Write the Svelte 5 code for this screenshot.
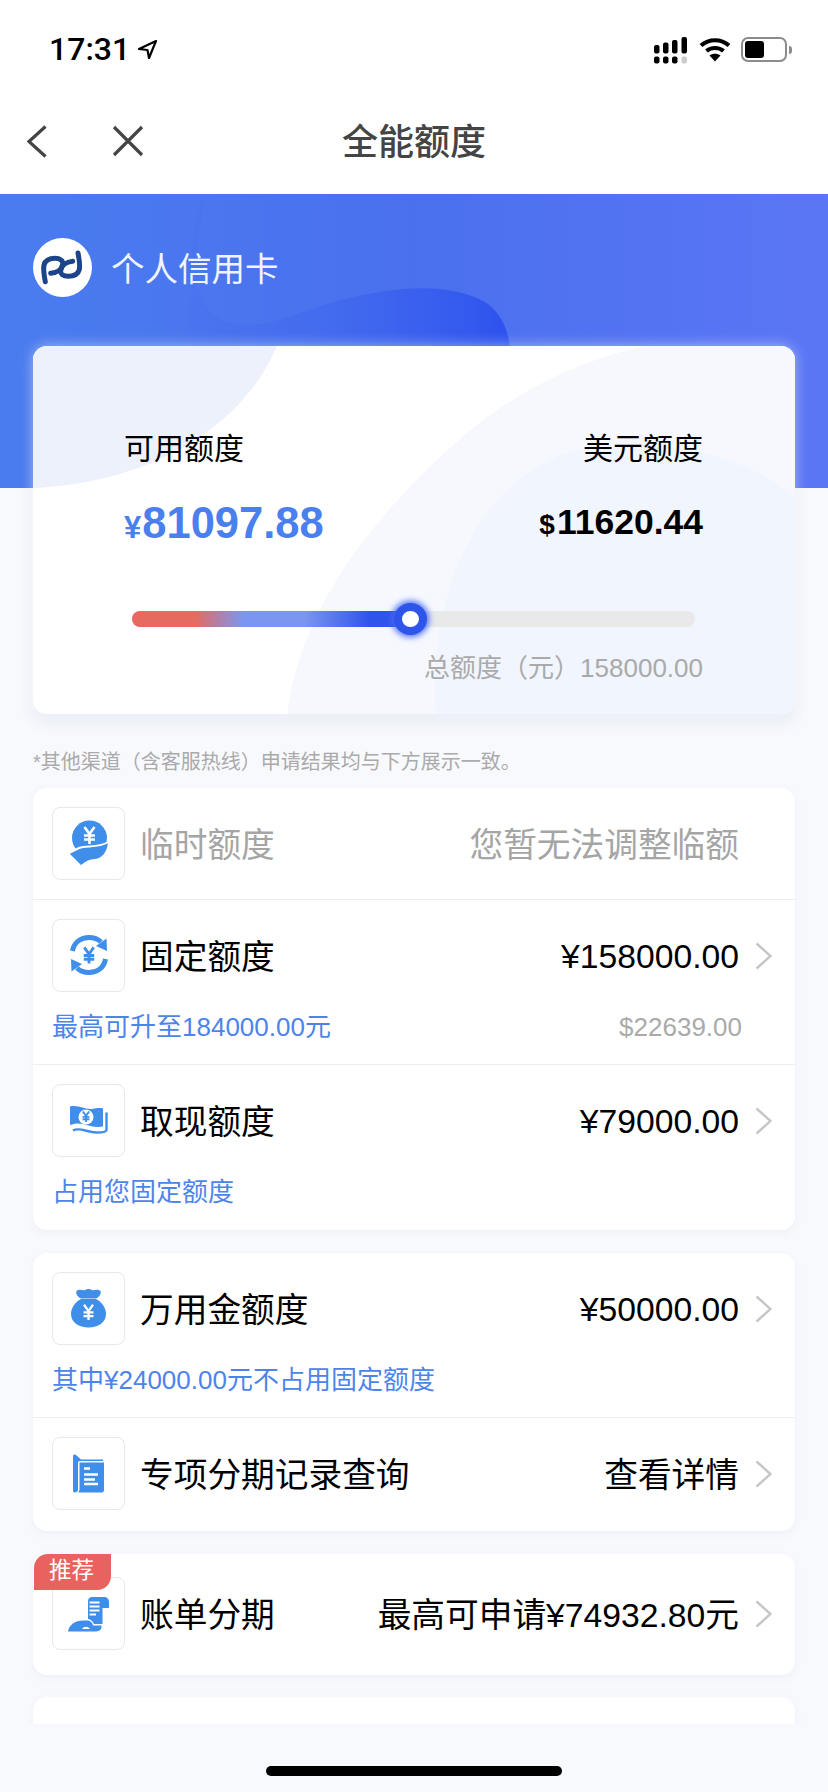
<script>
const yen = "M-5 -8 L0 -1 L5 -8 M0 -1 V9 M-5.5 0.5 H5.5 M-5.5 4.5 H5.5";
</script>

{#snippet chevron()}
    <svg class="chevron" viewBox="0 0 17 28"><path d="M1.5 1.5 L15.5 14 L1.5 26.5"/></svg>
{/snippet}

<div class="screen">
    <div class="status">
        <div class="time">
            <span>17:31</span>
            <svg width="21" height="21" viewBox="0 0 21 21"><path d="M19 2 L2 10 L10.5 11 L12 19 Z" fill="none" stroke="#000" stroke-width="2.2" stroke-linejoin="round"/></svg>
        </div>
        <div class="status-icons">
            <svg width="34" height="27" viewBox="0 0 34 27">
                <rect x="0" y="8" width="5.500" height="8.500" rx="2"/>
                <rect x="9" y="5.500" width="5.500" height="11" rx="2"/>
                <rect x="18" y="3" width="5.500" height="13.500" rx="2"/>
                <rect x="27.500" y="0" width="5.500" height="16.500" rx="2"/>
                <rect x="0" y="19.500" width="5.500" height="7" rx="2"/>
                <rect x="9" y="19.500" width="5.500" height="7" rx="2"/>
                <rect x="18" y="19.500" width="5.500" height="7" rx="2"/>
                <rect x="27.500" y="19.500" width="5.500" height="7" rx="2" fill="#ccc"/>
            </svg>
            <svg class="wifi" width="32" height="25" viewBox="0 0 32 25">
                <path d="M2 8.500 C10 1.500 22 1.500 30 8.500 M7.500 14 C12 10 20 10 24.500 14" fill="none" stroke="#000" stroke-width="4.200"/>
                <path d="M16 24.500 L10.500 18.500 C13.500 16 18.500 16 21.500 18.500 Z"/>
            </svg>
            <div class="battery"><div class="battery-level"></div></div>
            <div class="battery-nub"></div>
        </div>
    </div>

    <div class="nav">
        <svg class="nav-back" width="22" height="33" viewBox="0 0 22 33"><path d="M19.500 1.500 L3 16.500 L19.500 31.500"/></svg>
        <svg class="nav-close" width="32" height="32" viewBox="0 0 32 32"><path d="M2 2 L30 30 M30 2 L2 30"/></svg>
        <div class="nav-title">全能额度</div>
    </div>

    <div class="page">
        <div class="hero">
            <div class="band">
                <svg class="blob" viewBox="0 0 828 294" preserveAspectRatio="none">
                    <defs>
                        <linearGradient id="blobFill" x1="0" x2="1" y1="0" y2="0">
                            <stop offset="0" stop-color="#3f64ea" stop-opacity="0.07"/>
                            <stop offset="0.45" stop-color="#3760ee" stop-opacity="0.4"/>
                            <stop offset="1" stop-color="#2d52ee"/>
                        </linearGradient>
                    </defs>
                    <path d="M205 0 C186 40 186 90 212 120 C240 140 270 130 320 112 C390 90 450 88 485 108 C510 124 514 160 506 170 L180 170 Z" fill="url(#blobFill)"/>
                </svg>
            </div>

            <div class="brand">
                <svg class="logo" width="59" height="59" viewBox="0 0 59 59">
                    <circle cx="29.500" cy="29.500" r="29.500" fill="#fff"/>
                    <g fill="none" stroke="#1c4488" stroke-width="5" stroke-linecap="round">
                        <path d="M12.300 43.700 C11 37 10.300 30.300 11 27 C12.300 22 17.700 20.300 22.300 20.300 C27 20.300 30.300 22.700 29.700 26 C29 31.300 23.700 34.700 17.700 35.300"/>
                        <path d="M45 15 C46.300 21.700 47 28.300 46.300 31.700 C45 36.700 39.700 38.300 35 38.300 C30.300 38.300 27 36 27.700 32.700 C28.300 27.300 33.700 24 39.700 23.300"/>
                    </g>
                </svg>
                <span>个人信用卡</span>
            </div>

            <div class="summary">
                <svg class="summary-bg" viewBox="0 0 762 368" preserveAspectRatio="none">
                    <path d="M0 0 H244 C214 72 130 136 0 142 Z" fill="#ecf1fc"/>
                    <path d="M611 0 H762 V368 H254 C268 260 340 170 430 90 C490 40 550 14 611 0 Z" fill="#f6f8fe"/>
                    <path d="M403 368 C394 260 440 120 560 101 C640 92 710 110 762 150 V368 Z" fill="#f1f5fd"/>
                </svg>
                <div class="balances">
                    <div>
                        <div class="balance-label">可用额度</div>
                        <div class="balance-main"><small>¥</small>81097.88</div>
                    </div>
                    <div class="right">
                        <div class="balance-label">美元额度</div>
                        <div class="balance-usd"><small>$</small>11620.44</div>
                    </div>
                </div>
                <div class="track">
                    <div class="track-fill"></div>
                    <div class="thumb"></div>
                </div>
                <div class="total">总额度（元）158000.00</div>
            </div>

            <div class="note">*其他渠道（含客服热线）申请结果均与下方展示一致。</div>
        </div>

        <div class="cards">
            <div class="card card-a">
                <div class="row muted">
                    <div class="icon">
                        <svg viewBox="0 0 73 73">
                            <circle cx="37.500" cy="31" r="17.500"/>
                            <path d="M17.500 46.500 L27 41.500 C35 38.500 45 42 56 35.500 C55 45 50 51.500 43 52 C37 52.500 35 53.500 29 58 Z"/>
                            <path class="gap" d="M17 46 L27 41 C35 38 45 41.500 56.500 35"/>
                            <path class="yen" transform="translate(37.500 28)" d={yen}/>
                        </svg>
                    </div>
                    <div class="label">临时额度</div>
                    <div class="value plain cjk">您暂无法调整临额</div>
                </div>

                <div class="row has-sub">
                    <div class="icon">
                        <svg viewBox="0 0 73 73">
                            <path class="ring" d="M20.500 32 C22 23 29 18.500 37 18.500 C42 18.500 46 20 49 23"/>
                            <path d="M54.500 19.500 L55 32 L44 27 Z"/>
                            <path class="ring" d="M53.500 40 C52 49 45 53.500 37 53.500 C32 53.500 28 52 25 49"/>
                            <path d="M19.500 52.500 L19 40 L30 45 Z"/>
                            <path class="yen thin" transform="translate(37 36) scale(0.95)" d={yen}/>
                        </svg>
                    </div>
                    <div class="label">固定额度</div>
                    <div class="value">¥158000.00</div>
                    {@render chevron()}
                </div>
                <div class="sub">
                    <span>最高可升至184000.00元</span>
                    <span class="sub-usd">$22639.00</span>
                </div>

                <div class="row has-sub">
                    <div class="icon">
                        <svg viewBox="0 0 73 73">
                            <path d="M18 22.500 C26 20.500 33 25.500 39 25 C44 24.500 47 23.500 51 24.500 V42.500 C43 44 37 41.500 31 40 C26 39 22 39.500 18 41 Z"/>
                            <circle cx="34" cy="33" r="7.500" fill="#fff"/>
                            <path class="yen thin" transform="translate(34 32.500) scale(0.62)" d={yen}/>
                            <path class="line" d="M21 46.500 C28 42.500 36 49 45 48.500 C49 48.500 54.500 48.500 54.500 46 V28.500"/>
                        </svg>
                    </div>
                    <div class="label">取现额度</div>
                    <div class="value">¥79000.00</div>
                    {@render chevron()}
                </div>
                <div class="sub sub-inset">占用您固定额度</div>
            </div>

            <div class="card card-b">
                <div class="row has-sub">
                    <div class="icon">
                        <svg viewBox="0 0 73 73">
                            <path d="M25 18.500 C28 16.500 31 19 33 18 C35 16.500 38 16.500 40 18 C42 19 45 16.500 48 18.500 C50 20 48 25 44 26.500 H29 C25 25 23 20 25 18.500 Z"/>
                            <path d="M29 27 H44 C50 30 54 36 54 42 C54 50.500 46 55.500 36.500 55.500 C27 55.500 19 50.500 19 42 C19 36 23 30 29 27 Z"/>
                            <path class="yen" transform="translate(36.500 40) scale(0.9)" d={yen}/>
                        </svg>
                    </div>
                    <div class="label">万用金额度</div>
                    <div class="value">¥50000.00</div>
                    {@render chevron()}
                </div>
                <div class="sub">其中¥24000.00元不占用固定额度</div>

                <div class="row">
                    <div class="icon">
                        <svg viewBox="0 0 73 73">
                            <path d="M21 19 C21 17.500 23 17 24 18 L29 22.500 H51 V24 H28 C26.500 24 26 25 26 26.500 V53 C26 55 23 56 21.500 55 C21 54.500 21 54 21 53 Z"/>
                            <path d="M27.500 25.500 H52 V53 C52 54.500 51 55.500 50 55.500 H26 C27 54.500 27.500 53.500 27.500 52 Z"/>
                            <path class="bars" d="M32 31.500 H38 M32 37.500 H46 M32 42.500 H43 M32 47 H46"/>
                        </svg>
                    </div>
                    <div class="label">专项分期记录查询</div>
                    <div class="value cjk">查看详情</div>
                    {@render chevron()}
                </div>
            </div>

            <div class="card card-c">
                <div class="badge">推荐</div>
                <div class="row">
                    <div class="icon">
                        <svg viewBox="0 0 73 73">
                            <path d="M36 24 C36 21.500 38 20 40 20 H52 C55 20 57 22 57 25 V31 H50.500 V47 H42 C41 44 38 42 36 42 Z"/>
                            <path d="M16 54.500 C17 48 23 43.500 31 43.500 H35 C38 43.500 40.500 45 41 48.500 H49.500 C50 51.500 48 54.500 44 54.500 Z"/>
                            <path class="bars thin-bars" d="M37.500 25.500 H47.500 M37.500 29.500 H47.500 M37.500 33.500 H47.500 M37.500 37.500 H44"/>
                            <path d="M30 52 C32 49 36 49 38 52 Z" fill="#fff"/>
                        </svg>
                    </div>
                    <div class="label">账单分期</div>
                    <div class="value cjk">最高可申请¥74932.80元</div>
                    {@render chevron()}
                </div>
            </div>

            <div class="card card-d"></div>
        </div>
    </div>

    <div class="home"><div class="home-bar"></div></div>
</div>

<style>
:global(body) {
    margin: 0;
    background: #f7f9fd;
}

.screen {
    width: 828px;
    height: 1792px;
    overflow: hidden;
    display: flex;
    flex-direction: column;
    background: #f7f9fd;
    font-family: "Liberation Sans", "Noto Sans CJK SC", sans-serif;
    color: #000;
}

.status {
    height: 90px;
    flex: none;
    box-sizing: border-box;
    padding: 37px 36px 0 49px;
    background: #fff;
    display: flex;
    justify-content: space-between;
    align-items: flex-start;
}

.time {
    display: flex;
    align-items: center;
    gap: 7px;
    height: 24px;
    font-family: Roboto, sans-serif;
    font-weight: 500;
    font-size: 32px;
}

.status-icons {
    display: flex;
    align-items: flex-start;
}

.status-icons .wifi {
    margin: 0 10px 0 11px;
}

.battery {
    width: 46px;
    height: 25px;
    box-sizing: border-box;
    border: 2px solid #8c8c8c;
    border-radius: 7px;
    padding: 2px;
}

.battery-level {
    width: 19px;
    height: 17px;
    background: #000;
    border-radius: 3px;
}

.battery-nub {
    width: 3px;
    height: 8px;
    margin: 9px 0 0 2px;
    background: #8c8c8c;
    border-radius: 0 3px 3px 0;
}

.nav {
    height: 104px;
    flex: none;
    background: #fff;
    position: relative;
    display: flex;
    align-items: center;
    justify-content: center;
}

.nav svg {
    position: absolute;
    fill: none;
    stroke: #444;
    stroke-width: 3.2;
}

.nav-back {
    left: 26px;
    top: 35px;
}

.nav-close {
    left: 112px;
    top: 35px;
}

.nav-title {
    font-size: 36px;
    font-weight: 500;
    color: #444;
    margin-bottom: 6px;
}

.page {
    height: 1530px;
    flex: none;
    overflow: hidden;
}

.hero {
    position: relative;
    padding: 0 33px;
}

.band {
    position: absolute;
    left: 0;
    right: 0;
    top: 0;
    height: 294px;
    background: linear-gradient(90deg, #4a7cef, #4a70ee 50%, #5b76f5);
}

.blob {
    width: 100%;
    height: 100%;
    display: block;
}

.brand {
    position: relative;
    height: 152px;
    box-sizing: border-box;
    padding-top: 44px;
    display: flex;
    align-items: flex-start;
    gap: 19px;
    color: #fff;
    font-size: 33.500px;
    line-height: 63px;
}

.brand span {
    opacity: 0.92;
}

.summary {
    position: relative;
    height: 368px;
    box-sizing: border-box;
    padding-top: 86px;
    background: #fff;
    border-radius: 14px;
    box-shadow: 0 0 14px rgba(255, 255, 255, 0.5), 0 8px 16px rgba(60, 80, 140, 0.09);
}

.summary-bg {
    position: absolute;
    left: 0;
    top: 0;
    width: 100%;
    height: 100%;
    border-radius: 14px;
}

.balances {
    position: relative;
    display: flex;
    justify-content: space-between;
    padding: 0 92px 0 91px;
}

.right {
    text-align: right;
}

.balance-label {
    font-size: 30px;
    line-height: 34px;
}

.balance-main {
    margin-top: 32px;
    font-size: 43.500px;
    line-height: 50px;
    font-weight: 700;
    color: #4a7ff0;
}

.balance-main small {
    font-size: 31px;
    margin-right: 1px;
}

.balance-usd {
    margin-top: 31px;
    font-size: 35.500px;
    line-height: 50px;
    font-weight: 700;
}

.balance-usd small {
    font-size: 28px;
    margin-right: 2px;
}

.track {
    position: relative;
    height: 16px;
    margin: 58px 100px 0 99px;
    border-radius: 8px;
    background: #e9e9e9;
}

.track-fill {
    width: 271px;
    height: 100%;
    border-radius: 8px 0 0 8px;
    background: linear-gradient(90deg, #e66a60 0, #e66a60 63px, #7b96f0 111px, #7b96f0 172px, #2f54eb 238px);
}

.thumb {
    position: absolute;
    left: 262px;
    top: -8px;
    width: 17px;
    height: 16px;
    border-radius: 50%;
    background: #fff;
    border: 8px solid #2f54eb;
    box-shadow: 0 0 6px 2px #4a6cf0;
}

.total {
    position: relative;
    margin: 25px 92px 0 0;
    text-align: right;
    font-size: 26px;
    line-height: 32px;
    color: #aaa;
}

.note {
    position: relative;
    margin-top: 33px;
    height: 30px;
    line-height: 30px;
    font-size: 20px;
    color: #aaa;
}

.cards {
    display: flex;
    flex-direction: column;
    gap: 23px;
    padding: 11px 33px 0;
}

.card {
    position: relative;
    flex: none;
    background: #fff;
    border-radius: 14px;
    box-shadow: 0 3px 8px rgba(60, 80, 140, 0.05);
}

.card-a {
    padding-bottom: 1px;
}

.card-b {
    padding-bottom: 2px;
}

.card-c {
    padding: 4px 0 6px;
}

.card-d {
    height: 60px;
    margin-top: -1px;
}

.row {
    display: flex;
    align-items: center;
    padding: 19px 23px 19px 19px;
    border-top: 1px solid #eee;
}

.card > .row:first-child,
.card-c .row {
    border-top: 0;
}

.row.has-sub {
    padding-bottom: 0;
}

.icon {
    width: 73px;
    height: 73px;
    flex: none;
    box-sizing: border-box;
    border: 1px solid #e8e8e8;
    border-radius: 8px;
    background: #fff;
}

.icon svg {
    display: block;
    width: 73px;
    height: 73px;
    margin: -1px;
    fill: #3f8eea;
}

.gap {
    fill: none;
    stroke: #fff;
    stroke-width: 2;
}

.yen {
    fill: none;
    stroke: #fff;
    stroke-width: 2.600;
}

.yen.thin {
    stroke: #3f8eea;
    stroke-width: 3;
}

.ring {
    fill: none;
    stroke: #3f8eea;
    stroke-width: 5;
}

.line {
    fill: none;
    stroke: #3f8eea;
    stroke-width: 2.400;
}

.bars {
    fill: none;
    stroke: #fff;
    stroke-width: 2.400;
}

.thin-bars {
    stroke-width: 1.800;
}

.label {
    flex: 1;
    margin-left: 15px;
    padding-top: 3px;
    font-size: 33.700px;
    line-height: 44px;
}

.value {
    font-size: 33.700px;
    line-height: 44px;
    white-space: nowrap;
}

.value.cjk {
    padding-top: 3px;
}

.value.plain {
    margin-right: 33px;
}

.muted .label,
.muted .value {
    color: #a5a5a5;
}

.chevron {
    width: 17px;
    height: 28px;
    flex: none;
    margin-left: 16px;
    fill: none;
    stroke: #c6c6c6;
    stroke-width: 2.400;
}

.sub {
    display: flex;
    justify-content: space-between;
    padding: 18px 53px 20px 19px;
    font-size: 26px;
    line-height: 34px;
    color: #4d84ec;
}

.sub-inset {
    padding-left: 19px;
}

.sub-usd {
    color: #aaa;
}

.badge {
    position: absolute;
    left: 1px;
    top: 0;
    z-index: 1;
    width: 77px;
    height: 36px;
    box-sizing: border-box;
    padding-left: 15px;
    background: #e8635f;
    color: #fff;
    font-size: 22.500px;
    line-height: 34px;
    border-radius: 14px 0 14px 0;
}

.home {
    flex: 1;
    display: flex;
    justify-content: center;
    padding-top: 42px;
}

.home-bar {
    width: 296px;
    height: 10px;
    border-radius: 5px;
    background: #000;
}
</style>
